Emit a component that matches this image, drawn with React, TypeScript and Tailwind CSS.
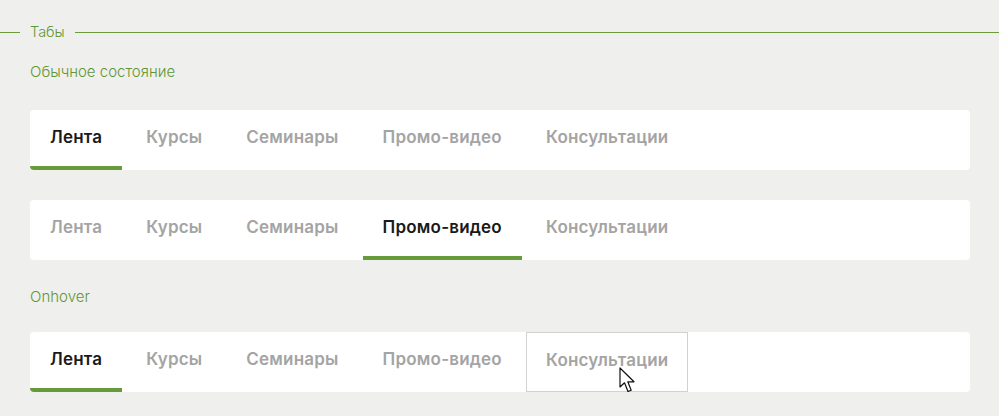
const tabs = ["Лента", "Курсы", "Семинары", "Промо-видео", "Консультации"];

function Cursor() {
  return (
    <svg
      className="absolute left-[92px] top-[34px]"
      width="20"
      height="28"
      viewBox="0 0 20 28"
    >
      <path
        d="M1 1 L1 20 L5.5 15.8 L9 24.5 L12.2 23.2 L8.8 14.8 L15 14.8 Z"
        fill="#ffffff"
        stroke="#111111"
        strokeWidth="1.2"
        strokeLinejoin="round"
      />
    </svg>
  );
}

function TabBar({ active, hover }: { active: number; hover?: number }) {
  return (
    <div className="flex h-[60px] gap-1 overflow-hidden rounded-[4px] bg-white">
      {tabs.map((t, i) => {
        const isActive = i === active;
        const isHover = i === hover;
        return (
          <div
            key={t}
            className={`relative flex h-full items-center text-[17px] font-semibold tracking-[0.2px] ${
              isHover
                ? "border border-[#d2d2d2] px-[19px] pb-[2px]"
                : isActive
                ? "border-b-4 border-[#679a3a] px-5"
                : "border-b-4 border-transparent px-5"
            } ${isActive ? "text-[#1a1a1a]" : "text-[#a4a4a4]"}`}
          >
            {t}
            {isHover && <Cursor />}
          </div>
        );
      })}
    </div>
  );
}

export default function App() {
  return (
    <div
      className="h-[416px] w-[999px] overflow-hidden bg-[#efefed] pt-6"
      style={{ fontFamily: "Inter, 'Noto Sans', sans-serif" }}
    >
      <div className="flex h-4 items-center">
        <div className="h-px w-5 bg-[#6a9c3c]" />
        <span className="px-[10px] text-[14.5px] font-light text-[#5f9636]">Табы</span>
        <div className="h-px flex-1 bg-[#6a9c3c]" />
      </div>
      <div className="pl-[30px] pr-[29px]">
        <div className="mt-[22px] h-5 text-[15px] font-light leading-5 text-[#5f9636]">
          Обычное состояние
        </div>
        <div className="mt-[28px]">
          <TabBar active={0} />
        </div>
        <div className="mt-[30px]">
          <TabBar active={3} />
        </div>
        <div className="mt-[27px] h-5 text-[15px] font-light leading-5 text-[#5f9636]">
          Onhover
        </div>
        <div className="mt-[25px]">
          <TabBar active={0} hover={4} />
        </div>
      </div>
    </div>
  );
}
